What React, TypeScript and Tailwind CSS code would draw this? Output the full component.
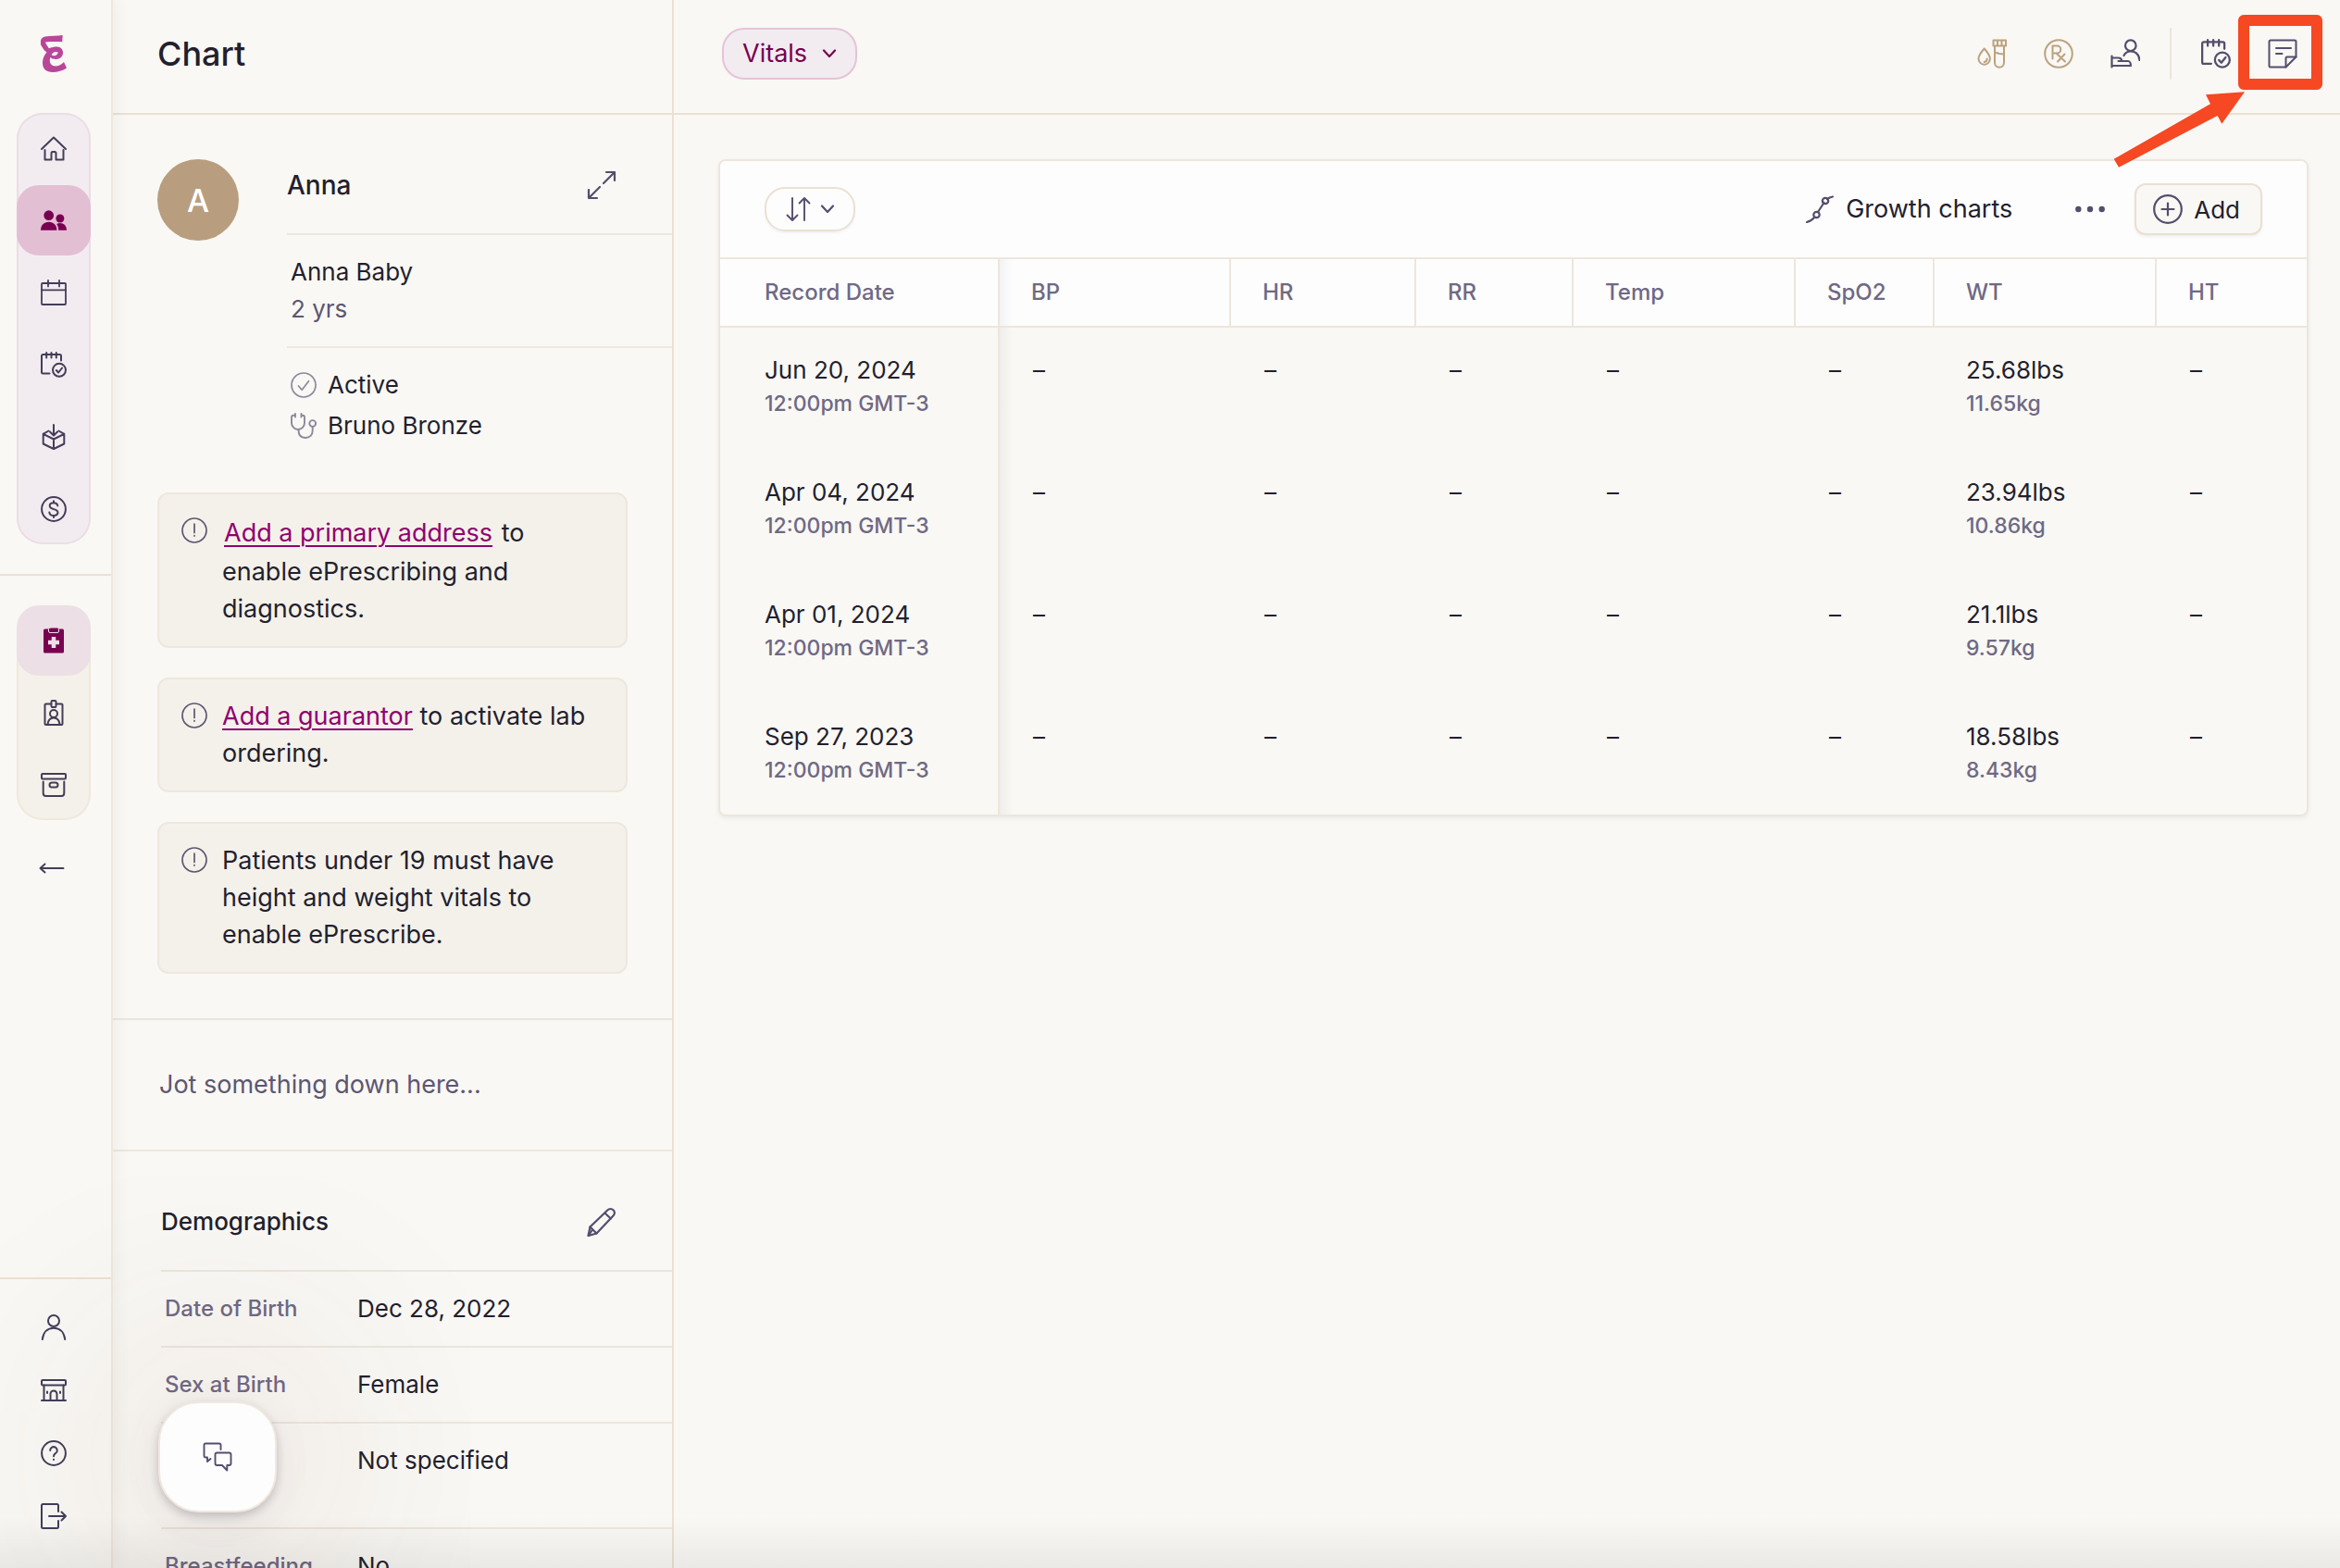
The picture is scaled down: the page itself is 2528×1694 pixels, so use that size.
import type { ReactNode } from "react";

type IconProps = { className?: string; size?: number; sw?: number; box?: number; children?: ReactNode };

function Icon({ className = "", size = 28, sw = 2, box = 28, children }: IconProps) {
  return (
    <svg
      width={size}
      height={size}
      viewBox={`0 0 ${box} ${box}`}
      fill="none"
      stroke="currentColor"
      strokeWidth={sw}
      strokeLinecap="round"
      strokeLinejoin="round"
      aria-hidden="true"
      className={`shrink-0 ${className}`}
    >
      {children}
    </svg>
  );
}

const Logo = () => (
  <svg width="28" height="40" viewBox="0 0 28 40" fill="#b8479a" aria-hidden="true">
    <path
      fillRule="evenodd"
      d="M23.700 0L23.200 7.300C17 6.800 11 7 5 7.400C5.500 10 7.500 11.500 8.800 14.200C11.500 13.200 14.500 12.600 17.700 12.600C22 12.800 24.200 16 24 19.500C23.600 23.500 20.500 25.800 16.500 25.900C13.500 25.900 11.800 25.200 10.400 24C9.600 26.500 9.400 29 10.800 31C12.500 33.300 15.500 33.600 18 33.300C20.500 32.900 23 31 25 29L28 35.600C24 38.700 18 40 13 40C6 40 2 36.500 2 30C2 25.500 3.600 21.500 6.500 18.500C3 16 1.800 13 -0.100 10C-0.800 6 0.500 2.200 5 1.500C11 0.600 18 0.800 23.700 0ZM11.600 21.300C14 23.300 18 22.300 18.800 18.600C15.800 17 12.800 18.300 11.600 21.300Z"
    />
  </svg>
);

const HomeIcon = () => (
  <Icon>
    <path d="M1 15 14 2.500l13 12.500M4.500 16v10.500h7v-7a1.500 1.500 0 0 1 1.500-1.500h2a1.500 1.500 0 0 1 1.500 1.500v7h8V16" />
  </Icon>
);

const PeopleIcon = () => (
  <Icon>
    <g fill="currentColor" stroke="none">
      <circle cx="8.700" cy="8.700" r="5.400" />
      <circle cx="20.900" cy="12" r="4.500" />
      <path d="M0 24.700c0-5.500 3.500-9 8.700-9s8.700 3.500 8.700 9z" />
      <path d="M19.200 24.700c0-2.600-.7-4.800-2-6.700 1-.6 2.200-.9 3.600-.9 4.400 0 7.200 3 7.200 7.600z" />
    </g>
  </Icon>
);

const CalendarIcon = () => (
  <Icon sw={1.800}>
    <rect x="1" y="4" width="26" height="23" rx="1" />
    <path d="M1 11.300h26M8 .9v6.500M20 .9v6.500" />
  </Icon>
);

const ChecklistIcon = ({ size = 28 }: { size?: number }) => (
  <Icon size={size}>
    <path d="M9.500 23.500H2.500A1.500 1.500 0 0 1 1 22V4.500A1.500 1.500 0 0 1 2.500 3H20.500A1.500 1.500 0 0 1 22 4.500V9.500" />
    <path d="M6.200 1v5.600M11.500 1v5.600M16.800 1v5.600" />
    <circle cx="20" cy="19.800" r="7" />
    <path d="m16.800 20 2.300 2.500 4-5" />
  </Icon>
);

const PackageIcon = () => (
  <Icon>
    <path d="m8.500 7.500-5.800 3.300V21.500L14 27l11.300-5.500V10.800L19.500 7.500M2.700 10.800 14 16.500l11.300-5.700M14 16.500V27" />
    <path d="M14 1v11M10 8.500l4 4 4-4" />
  </Icon>
);

const DollarIcon = () => (
  <Icon>
    <circle cx="14" cy="14" r="12.900" />
    <path d="M18.300 10.400c-.4-2.200-2.200-3.200-4.300-3.200-2.400 0-4.300 1.200-4.300 3.300 0 4.600 8.800 2.600 8.800 7.100 0 2.200-2 3.400-4.400 3.400-2.500 0-4.500-1.200-4.800-3.400M14 5.200v2M14 21v2" />
  </Icon>
);

const ClipboardIcon = () => (
  <Icon>
    <path
      d="M4.500 1.500h19A1.500 1.500 0 0 1 25 3v23a1.500 1.500 0 0 1-1.500 1.500h-19A1.500 1.500 0 0 1 3 26V3a1.500 1.500 0 0 1 1.500-1.500z"
      fill="currentColor"
      stroke="none"
    />
    <rect x="8.500" y="0" width="11" height="5.500" rx="1.500" fill="currentColor" stroke="#eddfe6" strokeWidth="1" />
    <path d="M14 10v12M8 16h12" stroke="#eddfe6" strokeWidth="4.500" strokeLinecap="butt" />
  </Icon>
);

const BadgeIcon = () => (
  <Icon>
    <path d="M11 4.500H5.500A1 1 0 0 0 4.500 5.500v20.500a1 1 0 0 0 1 1h17a1 1 0 0 0 1-1V5.500a1 1 0 0 0-1-1H17" />
    <rect x="11.500" y="1" width="5" height="7" rx="1" />
    <circle cx="14" cy="15" r="4" />
    <path d="M7.500 26.500c.6-4.500 3-7 6.500-7s5.900 2.500 6.500 7" />
  </Icon>
);

const ArchiveIcon = () => (
  <Icon>
    <rect x="1" y="2" width="26" height="5.500" rx="1" />
    <path d="M2.700 10.500V23a3 3 0 0 0 3 3h16.600a3 3 0 0 0 3-3V10.500" />
    <rect x="9.500" y="11.500" width="9" height="5" rx="2.500" />
  </Icon>
);

const ArrowLeftIcon = () => (
  <Icon sw={1.900}>
    <path d="M26.500 14H1.500M6.500 9.500 1.500 14l5 4.500" />
  </Icon>
);

const UserIcon = () => (
  <Icon>
    <circle cx="14" cy="7" r="6" />
    <path d="M1.800 27c.9-7.500 5.500-12.300 12.200-12.300S25.300 19.500 26.200 27" />
  </Icon>
);

const StoreIcon = () => (
  <Icon>
    <rect x="1" y="3" width="26" height="5.500" rx="1" />
    <path d="M3.500 8.500V24M24.500 8.500V24M1 25h26M10.500 24v-6a3.500 3.500 0 0 1 7 0v6M7 15.500v1.500M21 15.500v1.500" />
  </Icon>
);

const HelpIcon = () => (
  <Icon>
    <circle cx="14" cy="14" r="12.900" />
    <path d="M10.200 11a3.800 3.800 0 1 1 5.800 3.200c-1.300.8-2 1.500-2 3M14 20.800v.2" />
  </Icon>
);

const LogoutIcon = () => (
  <Icon>
    <path d="M19 9V2.500A1.500 1.500 0 0 0 17.500 1h-15A1.500 1.500 0 0 0 1 2.500v23A1.500 1.500 0 0 0 2.500 27h15a1.500 1.500 0 0 0 1.500-1.500V19" />
    <path d="M9 14h18M22.500 9.500 27 14l-4.500 4.500" />
  </Icon>
);

const ExpandIcon = () => (
  <Icon size={32} box={32} sw={2.200}>
    <path d="M18 14 30 2M21 2h9v9M14 18 2 30M11 30H2v-9" />
  </Icon>
);

const CheckCircleIcon = () => (
  <Icon sw={1.700} className="text-[#8c889c]">
    <circle cx="14" cy="14" r="13" />
    <path d="m8.500 15 3.700 4.200 7.300-9.500" />
  </Icon>
);

const StethoscopeIcon = () => (
  <Icon sw={1.900} className="text-[#8c889c]">
    <path d="M5 1v3.500M5 2.700H3A2 2 0 0 0 1 4.700V11a7 7 0 0 0 14 0V4.700a2 2 0 0 0-2-2h-1.500M11.500 1v3.500" />
    <path d="M8.500 18.500C8.500 24 11.500 27 16 27s7.700-3 7.700-8v-4" />
    <circle cx="23.700" cy="11.500" r="3.400" />
  </Icon>
);

const AlertIcon = () => (
  <Icon sw={1.700} className="text-[#5d5672]">
    <circle cx="14" cy="14" r="13" />
    <path d="M14 7v9.500M14 19.500v.6" />
  </Icon>
);

const PencilIcon = () => (
  <Icon size={32} box={32} sw={2.200}>
    <path d="M22.500 3.300a4.300 4.300 0 0 1 6.200 6L10.500 28.500 1.500 31l2-9.500z" />
    <path d="m19.500 6.500 6.300 6M3.500 21.500l7 7M6 24.500 2 30.500" />
  </Icon>
);

const ChatIcon = () => (
  <Icon size={32} box={32} sw={1.900}>
    <path d="M19.500 8V3A1.500 1.500 0 0 0 18 1.500H3A1.500 1.500 0 0 0 1.500 3v12a1.500 1.500 0 0 0 1.500 1.500h2v4.500l3.500-3" />
    <path d="M15.500 11.500h13a2 2 0 0 1 2 2v9.500a2 2 0 0 1-2 2h-2.200v5.500L21 25h-5.500a2 2 0 0 1-2-2v-9.500a2 2 0 0 1 2-2z" />
  </Icon>
);

const ChevronIcon = ({ className = "" }: { className?: string }) => (
  <svg width="16" height="10" viewBox="0 0 16 10" fill="none" stroke="currentColor" strokeWidth="2.200" strokeLinecap="round" strokeLinejoin="round" aria-hidden="true" className={className}>
    <path d="m2 1.500 6 6.500 6-6.500" />
  </svg>
);

const SortIcon = () => (
  <Icon sw={1.900}>
    <path d="M8 2v23.500M2.500 20.500 8 26l5.500-5.500M21 26V2.500M15.500 7.500 21 2l5.500 5.500" />
  </Icon>
);

const LabIcon = () => (
  <Icon size={32} box={32} className="text-[#bba27f]">
    <path d="M7.700 10.500c3.600 4 6.200 8 6.200 11a6.200 6.200 0 0 1-12.400 0c0-3 2.600-7 6.200-11z" />
    <path d="M10.700 21.500c0 2-1 3.200-3 3.500M17.500 1.500h13.500v6H17.500zM22 1.500v6M26.500 1.500v6M19 7.500v18.200a5 5 0 0 0 10 0V7.500M19 14.500l5 1.500 5 .5" />
  </Icon>
);

const RxIcon = () => (
  <Icon size={32} box={32} className="text-[#bba27f]">
    <circle cx="16" cy="16" r="14.800" />
    <path d="M9.500 21.500V7.500h4.800a4 4 0 0 1 0 8H9.500M13.500 15.500l9.500 9M22.500 16.500l-7.500 8" />
  </Icon>
);

const CareIcon = () => (
  <Icon size={32} box={32} sw={2.200}>
    <circle cx="21.800" cy="7.200" r="5.800" />
    <path d="M14.500 18c1.500-3 4-4.500 7.300-4.500 5.500 0 9 3.500 9.700 9.500M1.500 18.500v12M1.500 20.500h7c2 0 3.500 1 3.500 2.800M8.500 24h10.500c1.500 0 3 2 3 5H1.500M8.500 24h4" />
  </Icon>
);

const NoteIcon = () => (
  <Icon size={32} box={32}>
    <path d="M19.500 30.500H3A1.500 1.500 0 0 1 1.500 29V3A1.500 1.500 0 0 1 3 1.500h26A1.500 1.500 0 0 1 30.500 3v16.500z" />
    <path d="M30.500 19.500H21a1.500 1.500 0 0 0-1.500 1.500v9.500M9 10h16M9 16h6.500" />
  </Icon>
);

const GrowthIcon = () => (
  <Icon size={32} box={32} sw={2.200}>
    <path d="M2 30c4-1 6-2.500 8-5M14 19l6.500-10M24 5c2-1.500 3.500-2 6-2.500" />
    <circle cx="12.500" cy="22" r="3.200" />
    <circle cx="22" cy="7" r="3.200" />
  </Icon>
);

const DotsIcon = () => (
  <svg width="32" height="8" viewBox="0 0 32 8" fill="currentColor" aria-hidden="true">
    <circle cx="3.300" cy="4" r="3.200" />
    <circle cx="16" cy="4" r="3.200" />
    <circle cx="28.700" cy="4" r="3.200" />
  </svg>
);

const PlusCircleIcon = () => (
  <Icon size={32} box={32} sw={2.200}>
    <circle cx="16" cy="16" r="14.800" />
    <path d="M16 9.500v13M9.500 16h13" />
  </Icon>
);

type NavItem = { label: string; icon: ReactNode; active?: boolean };

const mainNav: NavItem[] = [
  { label: "Home", icon: <HomeIcon /> },
  { label: "Patients", icon: <PeopleIcon />, active: true },
  { label: "Calendar", icon: <CalendarIcon /> },
  { label: "Tasks", icon: <ChecklistIcon /> },
  { label: "Inbox", icon: <PackageIcon /> },
  { label: "Billing", icon: <DollarIcon /> },
];

const chartNav: NavItem[] = [
  { label: "Chart", icon: <ClipboardIcon />, active: true },
  { label: "Profile", icon: <BadgeIcon /> },
  { label: "Archive", icon: <ArchiveIcon /> },
];

const footNav: NavItem[] = [
  { label: "Account", icon: <UserIcon /> },
  { label: "Practice", icon: <StoreIcon /> },
  { label: "Help", icon: <HelpIcon /> },
  { label: "Log out", icon: <LogoutIcon /> },
];

function Sidebar() {
  return (
    <nav className="relative z-10 flex w-[122px] shrink-0 flex-col border-r-2 border-[#efe8dc] shadow-[4px_0_16px_rgba(70,60,90,0.06)]">
      <div className="flex h-[122px] items-start pt-[38px] pl-11">
        <Logo />
      </div>
      <div className="ml-[18px] flex w-20 flex-col gap-0.5 rounded-[28px] bg-[#f2ecf0] shadow-[inset_0_0_0_2px_#ecdde5]">
        {mainNav.map((n) => (
          <button
            key={n.label}
            aria-label={n.label}
            className={`flex h-[76px] items-center justify-center rounded-3xl ${n.active ? "bg-[#e3bfd4] text-[#780050]" : "text-[#433d59]"}`}
          >
            {n.icon}
          </button>
        ))}
      </div>
      <div className="mt-8 border-t-2 border-[#ebe0d2] pt-8">
        <div className="ml-[18px] flex w-20 flex-col gap-0.5 rounded-[28px] bg-[#f4f1ea] shadow-[inset_0_0_0_2px_#f0e8dd]">
          {chartNav.map((n) => (
            <button
              key={n.label}
              aria-label={n.label}
              className={`flex h-[76px] items-center justify-center rounded-3xl ${n.active ? "bg-[#eddfe6] text-[#780050]" : "text-[#433d59]"}`}
            >
              {n.icon}
            </button>
          ))}
        </div>
      </div>
      <button aria-label="Collapse" className="mt-8 ml-7 flex h-10 w-14 items-center justify-center text-[#433d59]">
        <ArrowLeftIcon />
      </button>
      <div className="mt-auto flex flex-col border-t-2 border-[#ebe0d2] pt-[18px] pb-[22px]">
        {footNav.map((n) => (
          <button key={n.label} aria-label={n.label} className="ml-[18px] flex h-[68px] w-20 items-center justify-center text-[#433d59]">
            {n.icon}
          </button>
        ))}
      </div>
    </nav>
  );
}

function Alert({ children }: { children: ReactNode }) {
  return (
    <div className="flex gap-4 rounded-xl border-2 border-[#eee7dd] bg-[#f4f1ea] py-5 pr-9 pl-6">
      <div className="pt-[5px]">
        <AlertIcon />
      </div>
      <p className="text-[27px] leading-10">{children}</p>
    </div>
  );
}

const demographics = [
  { label: "Date of Birth", value: "Dec 28, 2022", height: "h-20" },
  { label: "Sex at Birth", value: "Female", height: "h-20" },
  { label: "Gender", value: "Not specified", height: "h-28" },
  { label: "Breastfeeding", value: "No", height: "h-20" },
];

function ChartPanel() {
  return (
    <section className="relative flex w-[606px] shrink-0 flex-col overflow-hidden border-r-2 border-[#ebe0d2]">
      <header className="flex h-[124px] shrink-0 items-center border-b-2 border-[#ebe0d2] pl-12 pb-1.5">
        <h1 className="text-[36px] leading-[44px] font-medium">Chart</h1>
      </header>

      <div className="flex gap-[52px] pt-12 pl-12">
        <div className="flex size-[88px] shrink-0 items-center justify-center rounded-full bg-[#b89e7f] text-[34px] font-medium text-white">A</div>
        <div className="min-w-0 flex-1">
          <div className="flex h-[82px] items-start justify-between border-b-2 border-[#eee7dd] pt-2 pr-[60px]">
            <h2 className="text-[28px] leading-10 font-medium">Anna</h2>
            <button aria-label="Expand" className="flex size-10 items-center justify-end text-[#554d6c]">
              <ExpandIcon />
            </button>
          </div>
          <div className="flex h-[122px] flex-col justify-center border-b-2 border-[#eee7dd] pl-1 text-[26px] leading-10">
            <p>Anna Baby</p>
            <p className="text-[#5d5672]">2 yrs</p>
          </div>
          <div className="pt-[18px] pl-1 text-[26px] leading-[44px]">
            <p className="flex items-center gap-3">
              <CheckCircleIcon />
              Active
            </p>
            <p className="flex items-center gap-3">
              <StethoscopeIcon />
              Bruno Bronze
            </p>
          </div>
        </div>
      </div>

      <div className="mt-[50px] flex flex-col gap-8 px-12 pb-12">
        <Alert>
          <a href="#address" className="inline-block px-0.5 leading-[44px] text-[#900070] underline decoration-2 underline-offset-4">
            Add a primary address
          </a>{" "}
          to enable ePrescribing and diagnostics.
        </Alert>
        <Alert>
          <a href="#guarantor" className="text-[#900070] underline decoration-2 underline-offset-4">
            Add a guarantor
          </a>{" "}
          to activate lab ordering.
        </Alert>
        <Alert>Patients under 19 must have height and weight vitals to enable ePrescribe.</Alert>
      </div>

      <div className="flex h-[144px] shrink-0 items-center border-y-2 border-[#ece6dc] pl-[50px]">
        <input
          aria-label="Note"
          placeholder="Jot something down here..."
          className="w-full bg-transparent text-[27px] leading-10 outline-none placeholder:text-[#5d5672]"
        />
      </div>

      <div className="shrink-0 pl-[52px]">
        <div className="flex h-[130px] items-center justify-between border-b-2 border-[#ece6dc] pt-6 pr-[60px]">
          <h2 className="text-[26px] leading-10 font-medium">Demographics</h2>
          <button aria-label="Edit demographics" className="flex size-10 items-center justify-end text-[#554d6c]">
            <PencilIcon />
          </button>
        </div>
        <dl>
          {demographics.map((d) => (
            <div key={d.label} className="border-b-2 border-[#ece6dc] pl-1">
              <div className={`flex items-start pt-5 ${d.height}`}>
                <dt className="w-52 text-[24px] leading-10 font-medium text-[#6f6984]">{d.label}</dt>
                <dd className="text-[26px] leading-10">{d.value}</dd>
              </div>
            </div>
          ))}
        </dl>
      </div>
    </section>
  );
}

function TopBar() {
  return (
    <header className="flex h-[124px] shrink-0 items-start justify-between border-b-2 border-[#ebe0d2] pt-[30px] pr-[34px] pl-[52px]">
      <button className="flex h-14 items-center gap-4 rounded-3xl border-2 border-[#e5c3d8] bg-[#f2ecf0] px-5 text-[27px] text-[#780050]">
        Vitals
        <ChevronIcon />
      </button>
      <div className="flex items-center gap-4 text-[#554d6c]">
        <button aria-label="Labs" className="flex size-14 items-center justify-center">
          <LabIcon />
        </button>
        <button aria-label="Prescriptions" className="flex size-14 items-center justify-center">
          <RxIcon />
        </button>
        <button aria-label="Care team" className="flex size-14 items-center justify-center">
          <CareIcon />
        </button>
        <div className="mx-1 h-14 w-0.5 bg-[#ece6dc]" />
        <button aria-label="Tasks" className="flex size-14 items-center justify-center">
          <ChecklistIcon size={32} />
        </button>
        <div className="relative">
          <button aria-label="Notes" className="flex size-14 items-center justify-center">
            <NoteIcon />
          </button>
          <div className="pointer-events-none absolute -top-3.5 -left-5 h-[81px] w-[91px] rounded-md border-12 border-[#f54823]" />
          <svg width="144" height="84" viewBox="0 0 144 84" className="pointer-events-none absolute top-[68px] right-[67px]" aria-hidden="true">
            <path d="M0.700 73.700 105 14.300 100 4.300 142 1.300 117.300 35.700 112.700 27 6 82.700z" fill="#f54823" />
          </svg>
        </div>
      </div>
    </header>
  );
}

const columns = [
  { name: "Record Date", style: "w-[302px] pl-12 border-r-2" },
  {
    name: "BP",
    style: "w-[250px] pl-[34px] border-r-2 bg-[linear-gradient(to_right,rgba(70,60,90,0.06),transparent_14px)]",
  },
  { name: "HR", style: "w-[200px] pl-[34px] border-r-2" },
  { name: "RR", style: "w-[170px] pl-[34px] border-r-2" },
  { name: "Temp", style: "w-[240px] pl-[34px] border-r-2" },
  { name: "SpO2", style: "w-[150px] pl-[34px] border-r-2" },
  { name: "WT", style: "w-[240px] pl-[34px] border-r-2" },
  { name: "HT", style: "pl-[34px]" },
];

const records = [
  { date: "Jun 20, 2024", time: "12:00pm GMT-3", lbs: "25.68lbs", kg: "11.65kg" },
  { date: "Apr 04, 2024", time: "12:00pm GMT-3", lbs: "23.94lbs", kg: "10.86kg" },
  { date: "Apr 01, 2024", time: "12:00pm GMT-3", lbs: "21.1lbs", kg: "9.57kg" },
  { date: "Sep 27, 2023", time: "12:00pm GMT-3", lbs: "18.58lbs", kg: "8.43kg" },
];

function Dash({ shaded = false }: { shaded?: boolean }) {
  return (
    <td
      className={`pt-7 pl-9 align-top text-[26px] leading-9 ${shaded ? "bg-[linear-gradient(to_right,rgba(70,60,90,0.06),transparent_14px)]" : ""}`}
    >
      –
    </td>
  );
}

function VitalsTable() {
  return (
    <section className="rounded-lg border-2 border-[#ede6dc] shadow-[0_2px_4px_rgba(70,60,90,0.08)]">
      <div className="flex h-[104px] items-center justify-between rounded-t-md bg-[#fefdfe] px-12">
        <button aria-label="Sort" className="flex h-12 items-center gap-2.5 rounded-[22px] border-2 border-[#ebe0d2] px-5 text-[#554d6c] shadow-[0_2px_2px_rgba(70,60,90,0.06)]">
          <SortIcon />
          <ChevronIcon />
        </button>
        <div className="flex items-center text-[26px]">
          <button className="mr-[68px] flex items-center gap-3 text-[27px]">
            <span className="text-[#554d6c]">
              <GrowthIcon />
            </span>
            Growth charts
          </button>
          <button aria-label="More" className="mr-8 flex h-14 items-center text-[#554d6c]">
            <DotsIcon />
          </button>
          <button className="flex h-14 items-center gap-3 rounded-xl border-2 border-[#ebe0d2] bg-[#f9f8f4] pr-[22px] pl-[18px] shadow-[0_2px_3px_rgba(70,60,90,0.08)]">
            <span className="text-[#554d6c]">
              <PlusCircleIcon />
            </span>
            Add
          </button>
        </div>
      </div>
      <table className="w-full table-fixed border-separate border-spacing-0 text-left">
        <thead className="bg-[#fefdfe]">
          <tr className="h-[76px]">
            {columns.map((c) => (
              <th key={c.name} scope="col" className={`border-y-2 border-[#ede6dc] text-[24px] font-medium text-[#6f6984] ${c.style}`}>
                {c.name}
              </th>
            ))}
          </tr>
        </thead>
        <tbody>
          {records.map((r) => (
            <tr key={r.date} className="h-[132px] last:h-[130px]">
              <td className="border-r-2 border-[#ede6dc] pt-7 pl-12 align-top leading-9">
                <div className="text-[26px]">{r.date}</div>
                <div className="text-[23px] font-medium text-[#6f6984]">{r.time}</div>
              </td>
              <Dash shaded />
              <Dash />
              <Dash />
              <Dash />
              <Dash />
              <td className="pt-7 pl-[34px] align-top leading-9">
                <div className="text-[26px]">{r.lbs}</div>
                <div className="text-[23px] font-medium text-[#6f6984]">{r.kg}</div>
              </td>
              <Dash />
            </tr>
          ))}
        </tbody>
      </table>
    </section>
  );
}

export default function App() {
  return (
    <div className="relative flex h-screen overflow-hidden bg-[#f9f8f4] font-[Inter,sans-serif] text-[#231f2e]">
      <Sidebar />
      <ChartPanel />
      <main className="flex min-w-0 flex-1 flex-col">
        <TopBar />
        <div className="pt-12 pr-[34px] pl-12">
          <VitalsTable />
        </div>
      </main>
      <button
        aria-label="Open chat"
        className="absolute bottom-[60px] left-[171px] z-20 flex h-[120px] w-32 items-center justify-center rounded-[44px] border-2 border-[#f0e9dd] bg-[#fefdfe] text-[#554d6c] shadow-[0_4px_10px_rgba(60,50,70,0.22),0_12px_40px_rgba(60,50,70,0.08),0_0_420px_60px_rgba(120,60,60,0.12)]"
      >
        <ChatIcon />
      </button>
      <div className="pointer-events-none absolute inset-x-0 bottom-0 z-30 h-14 bg-linear-to-b from-transparent to-black/6" />
    </div>
  );
}
